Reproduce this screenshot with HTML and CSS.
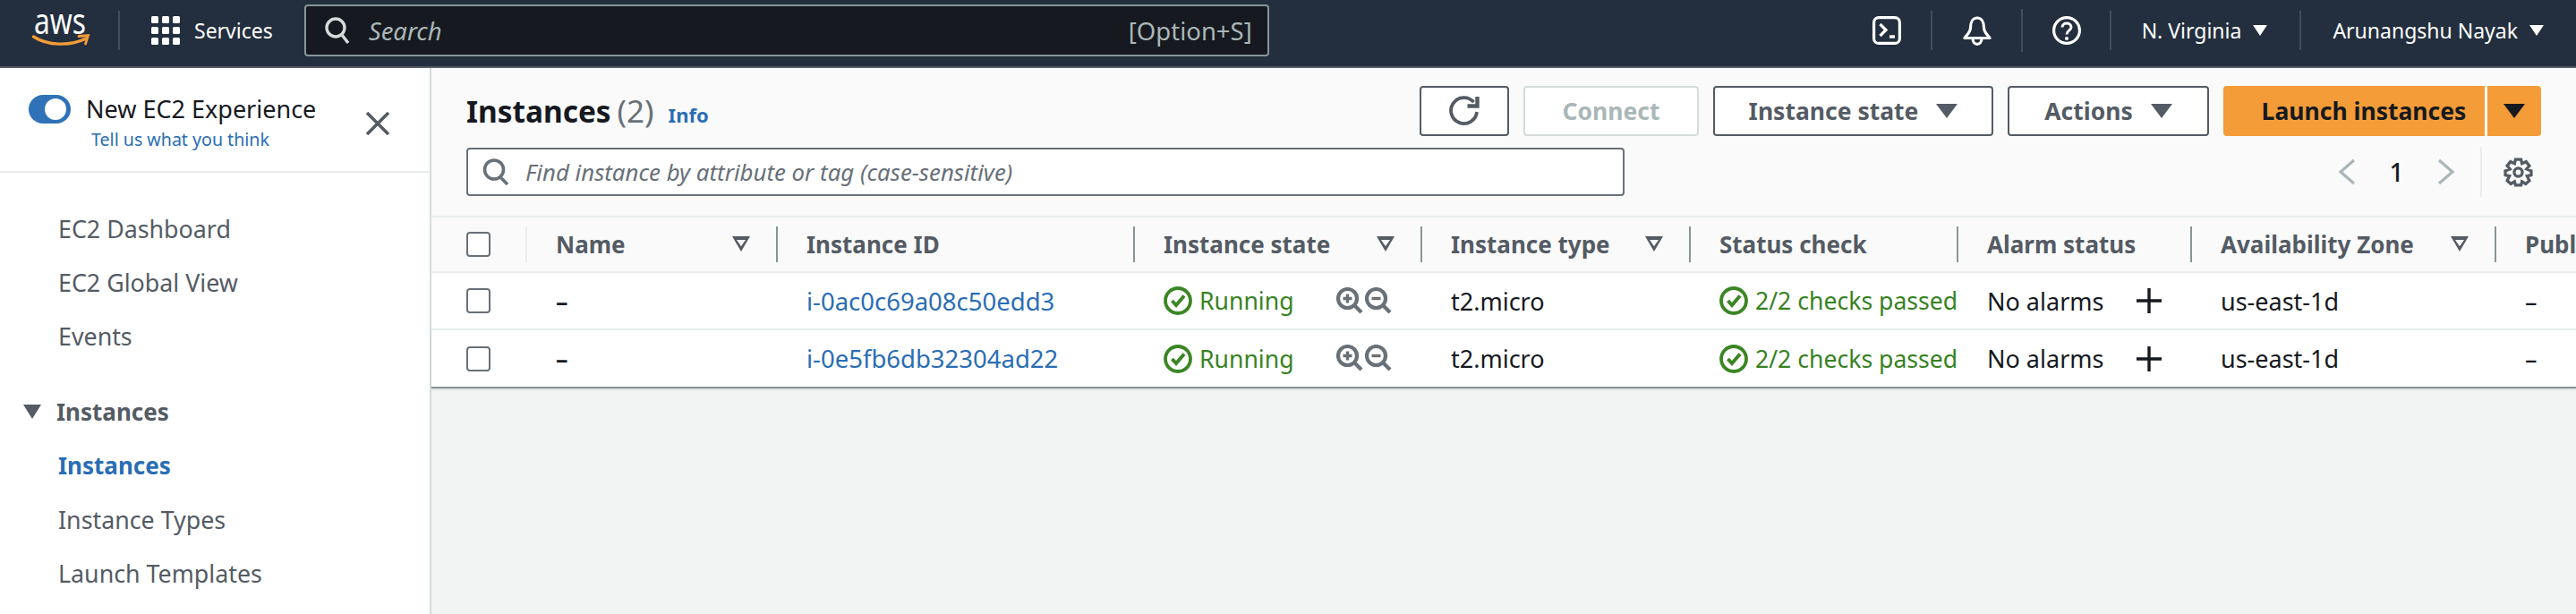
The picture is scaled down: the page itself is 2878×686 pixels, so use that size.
FILE: index.html
```html
<!DOCTYPE html>
<html lang="en">
<head>
<meta charset="utf-8">
<title>Instances | EC2</title>
<link rel="stylesheet" href="styles.css">
</head>
<body>
<header class="topnav">
  <div class="logo">
    <svg class="logo-svg" width="64" height="38" viewBox="0 0 64 38"><text x="2" y="23" class="logo-text" textLength="58" lengthAdjust="spacingAndGlyphs">aws</text><path d="M1.5 26 C17 36 42 37 60 28" fill="none" stroke="#f39c38" stroke-width="3.4" stroke-linecap="round"/><path d="M52 25.5 L62.5 24.5 L59.5 34" fill="none" stroke="#f39c38" stroke-width="2.8" stroke-linecap="round"/></svg>
  </div>
  <span class="nav-sep sep-logo"></span>
  <div class="services">
    <svg width="32" height="32" viewBox="0 0 32 32" fill="#fff"><rect x="0" y="0" width="8" height="8" rx="1.5"/><rect x="12" y="0" width="8" height="8" rx="1.5"/><rect x="24" y="0" width="8" height="8" rx="1.5"/><rect x="0" y="12" width="8" height="8" rx="1.5"/><rect x="12" y="12" width="8" height="8" rx="1.5"/><rect x="24" y="12" width="8" height="8" rx="1.5"/><rect x="0" y="24" width="8" height="8" rx="1.5"/><rect x="12" y="24" width="8" height="8" rx="1.5"/><rect x="24" y="24" width="8" height="8" rx="1.5"/></svg>
    <span>Services</span>
  </div>
  <div class="global-search">
    <svg width="28" height="30" viewBox="0 0 28 30" fill="none" stroke="#d5dbdb" stroke-width="3.4"><circle cx="12" cy="12" r="10"/><path d="M19 20 L26 29"/></svg>
    <span class="gs-text">Search</span>
    <span class="gs-key">[Option+S]</span>
  </div>
  <div class="nav-right">
    <svg width="32" height="32" viewBox="0 0 32 32" fill="none" stroke="#fff" stroke-width="3.2"><rect x="1.6" y="1.6" width="28.8" height="28.8" rx="5.5"/><path d="M8.5 9 L15 15.5 L8.5 22" stroke-width="3.2"/><path d="M19 23 H25" stroke-width="3.4"/></svg>
    <span class="nav-sep sep-a"></span>
    <svg width="32" height="33" viewBox="0 0 32 33" fill="none" stroke="#fff" stroke-width="3.2"><path d="M16 2 C11 2 8.500 7 8.500 13 C8.500 18 5 20 2 24.500 H30 C27 20 23.500 18 23.500 13 C23.500 7 21 2 16 2 Z" stroke-linejoin="round"/><path d="M11 25 C11 33.500 21 33.500 21 25"/></svg>
    <span class="nav-sep sep-b"></span>
    <svg width="32" height="32" viewBox="0 0 32 32" fill="none" stroke="#fff" stroke-width="3.2"><circle cx="16" cy="16" r="14.400"/><path d="M11 12.500 C11 6.500 21 6.500 21 12.500 C21 16 16 16 16 20.500" stroke-width="3"/><circle cx="16" cy="25" r="2" fill="#fff" stroke="none"/></svg>
    <span class="nav-sep sep-c"></span>
    <span class="nav-menu region">N. Virginia<i class="caret-w"></i></span>
    <span class="nav-sep sep-d"></span>
    <span class="nav-menu user">Arunangshu Nayak<i class="caret-w"></i></span>
  </div>
</header>
<div class="shell">
  <aside class="sidebar">
    <div class="exp">
      <div class="toggle"><span class="knob"></span></div>
      <div class="exp-text">
        <div class="exp-title">New EC2 Experience</div>
        <a class="exp-link">Tell us what you think</a>
      </div>
      <svg class="exp-close" width="26" height="26" viewBox="0 0 26 26" stroke="#545b64" stroke-width="3.6"><path d="M1 1 L25 25 M25 1 L1 25"/></svg>
    </div>
    <nav class="nav">
      <a class="nav-item">EC2 Dashboard</a>
      <a class="nav-item">EC2 Global View</a>
      <a class="nav-item">Events</a>
      <div class="nav-group"><i class="nav-caret"></i><span>Instances</span></div>
      <a class="nav-item active">Instances</a>
      <a class="nav-item">Instance Types</a>
      <a class="nav-item">Launch Templates</a>
    </nav>
  </aside>
  <main class="main">
    <div class="top-area">
      <div class="tool-row">
        <div class="title"><h1>Instances</h1><span class="count">(2)</span><a class="info">Info</a></div>
        <div class="actions">
          <button class="btn btn-refresh"><svg width="34" height="34" viewBox="0 0 34 34" fill="none" stroke="#545b64" stroke-width="3.8"><path d="M31 18 A14.500 14.500 0 1 1 27.500 7"/><path d="M31.500 1 V11.500 H20.500" stroke-width="4.400"/></svg></button>
          <button class="btn btn-disabled">Connect</button>
          <button class="btn btn-state">Instance state<i class="caret-g"></i></button>
          <button class="btn btn-actions">Actions<i class="caret-g"></i></button>
          <div class="launch"><span class="launch-main">Launch instances</span><span class="launch-split"><i class="caret-d"></i></span></div>
        </div>
      </div>
      <div class="filter-row">
        <div class="filter">
          <svg width="30" height="30" viewBox="0 0 30 30" fill="none" stroke="#687078" stroke-width="3.6"><circle cx="13" cy="12.500" r="10.500"/><path d="M20 21 L28 29"/></svg>
          <span>Find instance by attribute or tag (case-sensitive)</span>
        </div>
        <div class="pager">
          <svg width="20" height="30" viewBox="0 0 20 30" fill="none" stroke="#aab7b8" stroke-width="3.2"><path d="M18 2 L3 15 L18 28"/></svg>
          <span class="page-num">1</span>
          <svg width="20" height="30" viewBox="0 0 20 30" fill="none" stroke="#aab7b8" stroke-width="3.2"><path d="M2 2 L17 15 L2 28"/></svg>
          <span class="pager-sep"></span>
          <svg width="33" height="33" viewBox="0 0 32 32" fill="none" stroke="#545b64" stroke-width="3.2"><path d="M13 2 H19 L20 6.500 L24.500 4.500 L28 9 L25 12.500 L30 14.500 V19 L25.500 20 L28 25 L24 28.500 L20 26 L19 30 H13 L12 26 L8 28.500 L4 25 L6.500 20 L2 19 V14.500 L7 12.500 L4 9 L7.500 4.500 L12 6.500 Z"/><circle cx="16" cy="16" r="4.400"/></svg>
        </div>
      </div>
    </div>
    <div class="table">
      <div class="row head">
        <div class="cell chk"><span class="box"></span></div>
        <div class="cell first">Name<i class="filter-tri"></i></div>
        <div class="cell">Instance ID</div>
        <div class="cell">Instance state<i class="filter-tri"></i></div>
        <div class="cell">Instance type<i class="filter-tri"></i></div>
        <div class="cell">Status check</div>
        <div class="cell">Alarm status</div>
        <div class="cell">Availability Zone<i class="filter-tri"></i></div>
        <div class="cell">Public IPv4 DNS</div>
      </div>
      <div class="row body">
        <div class="cell chk"><span class="box"></span></div>
        <div class="cell dash">–</div>
        <div class="cell"><a class="link">i-0ac0c69a08c50edd3</a></div>
        <div class="cell ok">
          <svg class="st" width="32" height="32" viewBox="0 0 32 32" fill="none" stroke="#3b8624" stroke-width="3.8"><circle cx="16" cy="16" r="14"/><path d="M9.500 16 L14 21 L23 10.500" stroke-width="4"/></svg>Running
          <span class="zooms">
            <svg width="30" height="30" viewBox="0 0 30 30" fill="none" stroke="#687078" stroke-width="4.200"><circle cx="12.500" cy="12.500" r="10.500"/><path d="M20 20 L28 28"/><path d="M7.500 12.500 H17.500 M12.500 7.500 V17.500" stroke-width="3.400"/></svg>
            <svg width="30" height="30" viewBox="0 0 30 30" fill="none" stroke="#687078" stroke-width="4.200"><circle cx="12.500" cy="12.500" r="10.500"/><path d="M20 20 L28 28"/><path d="M7.500 12.500 H17.500" stroke-width="3.400"/></svg>
          </span>
        </div>
        <div class="cell">t2.micro</div>
        <div class="cell ok"><svg class="st" width="32" height="32" viewBox="0 0 32 32" fill="none" stroke="#3b8624" stroke-width="3.8"><circle cx="16" cy="16" r="14"/><path d="M9.500 16 L14 21 L23 10.500" stroke-width="4"/></svg>2/2 checks passed</div>
        <div class="cell">No alarms<svg class="plus" width="28" height="28" viewBox="0 0 28 28" stroke="#16191f" stroke-width="3.400"><path d="M0 14 H28 M14 0 V28"/></svg></div>
        <div class="cell">us-east-1d</div>
        <div class="cell">–</div>
      </div>
      <div class="row body last">
        <div class="cell chk"><span class="box"></span></div>
        <div class="cell dash">–</div>
        <div class="cell"><a class="link">i-0e5fb6db32304ad22</a></div>
        <div class="cell ok">
          <svg class="st" width="32" height="32" viewBox="0 0 32 32" fill="none" stroke="#3b8624" stroke-width="3.8"><circle cx="16" cy="16" r="14"/><path d="M9.500 16 L14 21 L23 10.500" stroke-width="4"/></svg>Running
          <span class="zooms">
            <svg width="30" height="30" viewBox="0 0 30 30" fill="none" stroke="#687078" stroke-width="4.200"><circle cx="12.500" cy="12.500" r="10.500"/><path d="M20 20 L28 28"/><path d="M7.500 12.500 H17.500 M12.500 7.500 V17.500" stroke-width="3.400"/></svg>
            <svg width="30" height="30" viewBox="0 0 30 30" fill="none" stroke="#687078" stroke-width="4.200"><circle cx="12.500" cy="12.500" r="10.500"/><path d="M20 20 L28 28"/><path d="M7.500 12.500 H17.500" stroke-width="3.400"/></svg>
          </span>
        </div>
        <div class="cell">t2.micro</div>
        <div class="cell ok"><svg class="st" width="32" height="32" viewBox="0 0 32 32" fill="none" stroke="#3b8624" stroke-width="3.8"><circle cx="16" cy="16" r="14"/><path d="M9.500 16 L14 21 L23 10.500" stroke-width="4"/></svg>2/2 checks passed</div>
        <div class="cell">No alarms<svg class="plus" width="28" height="28" viewBox="0 0 28 28" stroke="#16191f" stroke-width="3.400"><path d="M0 14 H28 M14 0 V28"/></svg></div>
        <div class="cell">us-east-1d</div>
        <div class="cell">–</div>
      </div>
    </div>
  </main>
</div>
</body>
</html>
```
FILE: styles.css
```css
* { box-sizing: border-box; }
html, body { margin: 0; height: 100%; overflow: hidden; }
body { font-family: "Noto Sans", "Open Sans", sans-serif; font-size: 26px; color: #16191f; background: #f2f3f3; }
a { text-decoration: none; }
i { display: inline-block; }
svg { flex: none; display: block; }

.topnav { height: 76px; background: #232f3e; border-bottom: 2px solid #545b64; display: flex; align-items: center; padding: 0 0 6px 36px; color: #fff; }
.logo { width: 64px; height: 38px; }
.logo-svg { overflow: visible; }
.logo-text { font-family: "Noto Sans", sans-serif; font-size: 40px; fill: #fff; }
.nav-sep { width: 2px; height: 44px; background: #414d5c; flex: none; }
.sep-logo { margin-left: 32px; }
.services { display: flex; align-items: center; gap: 16px; margin-left: 35px; font-size: 23px; }
.global-search { width: 1078px; height: 58px; margin-left: 35px; background: #16191f; border: 2px solid #879596; border-radius: 4px; display: flex; align-items: center; padding: 0 17px 0 21px; font-size: 27.5px; }
.gs-text { font-style: italic; color: #aab7b8; margin-left: 21px; }
.gs-key { margin-left: auto; color: #aab7b8; }
.nav-right { margin-left: auto; display: flex; align-items: center; font-size: 23px; padding-right: 36px; }
.sep-a { margin: 0 34px 0 33px; }
.sep-b { margin: 0 33px; height: 48px; }
.sep-c { margin: 0 34px 0 32px; }
.sep-d { margin: 0 35px 0 36px; }
.nav-menu { display: flex; align-items: center; gap: 13px; white-space: nowrap; }
.caret-w { width: 0; height: 0; border-left: 8px solid transparent; border-right: 8px solid transparent; border-top: 12px solid #fff; }

.shell { display: flex; height: calc(100vh - 76px); }
.sidebar { width: 482px; flex: none; background: #fff; border-right: 2px solid #d5dbdb; }
.exp { height: 117px; border-bottom: 2px solid #eaeded; display: flex; padding: 30px 0 0 32px; position: relative; }
.toggle { width: 47px; height: 32px; border-radius: 16px; background: #2f72b8; position: relative; flex: none; }
.knob { position: absolute; right: 5px; top: 4px; width: 24px; height: 24px; border-radius: 50%; background: #fff; }
.exp-text { margin-left: 17px; }
.exp-title { font-size: 27px; line-height: 32px; white-space: nowrap; }
.exp-link { display: block; margin: 5px 0 0 6px; font-size: 19.6px; line-height: 26px; color: #2a6db5; white-space: nowrap; }
.exp-close { position: absolute; left: 409px; top: 49px; }
.nav { padding-top: 32px; display: flex; flex-direction: column; color: #545b64; }
.nav-item { height: 60px; display: flex; align-items: center; padding-left: 65px; color: #545b64; font-size: 26.8px; }
.nav-item.active { color: #2a6db5; font-weight: 700; font-size: 26px; }
.nav-group { height: 60px; margin-top: 25px; display: flex; align-items: center; font-weight: 700; padding-left: 26px; font-size: 26px; color: #545b64; }
.nav-caret { width: 0; height: 0; border-left: 10px solid transparent; border-right: 10px solid transparent; border-top: 16px solid #545b64; margin-right: 17px; }

.main { flex: 1; min-width: 0; }
.top-area { background: #fafafa; padding: 20px 39px 22px 39px; }
.tool-row { display: flex; height: 56px; align-items: center; justify-content: space-between; }
.title { display: flex; align-items: baseline; position: relative; top: -1px; }
.title h1 { margin: 0; font-size: 33.4px; font-weight: 700; line-height: 44px; }
.count { font-size: 35px; color: #687078; margin-left: 7px; }
.info { font-size: 22px; font-weight: 700; color: #2a6db5; margin-left: 16px; }
.actions { display: flex; gap: 16px; }
.btn { font-family: inherit; height: 56px; border: 2px solid #545b64; border-radius: 4px; background: #fff; color: #545b64; font-size: 26.5px; font-weight: 700; display: flex; align-items: center; justify-content: center; padding: 0; }
.btn-refresh { width: 100px; }
.btn-disabled { width: 196px; color: #aab7b8; border-color: #d5dbdb; }
.btn-state { width: 313px; gap: 20px; }
.btn-actions { width: 225px; gap: 20px; }
.caret-g { width: 0; height: 0; border-left: 12px solid transparent; border-right: 12px solid transparent; border-top: 16px solid #545b64; }
.launch { display: flex; height: 56px; font-weight: 700; font-size: 26.5px; }
.launch-main { width: 292px; background: #f39c38; border-radius: 4px 0 0 4px; display: flex; align-items: center; justify-content: center; margin-right: 3px; padding-left: 22px; }
.launch-split { width: 60px; background: #f39c38; border-radius: 0 4px 4px 0; display: flex; align-items: center; justify-content: center; }
.caret-d { width: 0; height: 0; border-left: 12px solid transparent; border-right: 12px solid transparent; border-top: 16px solid #16191f; }
.filter-row { margin-top: 13px; display: flex; height: 54px; align-items: center; }
.filter { width: 1294px; height: 54px; border: 2px solid #687078; border-radius: 4px; background: #fff; display: flex; align-items: center; padding-left: 16px; font-style: italic; color: #687078; font-size: 25.8px; gap: 18px; }
.pager { margin-left: auto; margin-right: 9px; display: flex; align-items: center; }
.page-num { font-size: 28px; width: 91px; text-align: center; font-weight: 500; }
.pager-sep { width: 2px; height: 56px; background: #eaeded; margin: 0 24px 0 28px; }

.row { display: grid; grid-template-columns: 105px 280px 399px 321px 300px 299px 261px 340px 91px; background: #fff; }
.head { background: #fafafa; height: 64px; border-top: 2px solid #eaeded; border-bottom: 2px solid #eaeded; font-weight: 700; color: #545b64; }
.body { height: 64px; border-bottom: 2px solid #eaeded; font-size: 27px; }
.body.last { height: 65px; border-bottom: 2px solid #879596; box-shadow: 0 1px 2px rgba(0,28,36,.15); }
.cell { display: flex; align-items: center; padding-left: 34px; position: relative; white-space: nowrap; overflow: hidden; min-width: 0; }
.head .cell::before { content: ""; position: absolute; left: 0; top: 10px; bottom: 10px; width: 2px; background: #879596; }
.head .chk::before { display: none; }
.head .first::before { background: #eaeded; }
.chk { padding-left: 39px; }
.box { width: 27px; height: 28px; border: 2px solid #687078; border-radius: 4px; background: #fff; display: block; }
.filter-tri { position: absolute; width: 20px; height: 17px; right: 29px; top: 21px; }
.filter-tri::before { content: ""; position: absolute; inset: 0; background: #545b64; clip-path: polygon(0 0, 100% 0, 50% 100%, 0 0, 5px 4px, 50% 66%, 15px 4px, 5px 4px); }
.dash { font-weight: 600; }
.link { color: #2a6db5; font-size: 27.5px; }
.ok { color: #37821f; font-size: 26.6px; }
.st { margin-right: 8px; }
.zooms { display: flex; gap: 2px; position: absolute; left: 227px; top: 16px; }
.plus { margin-left: 37px; }
```
